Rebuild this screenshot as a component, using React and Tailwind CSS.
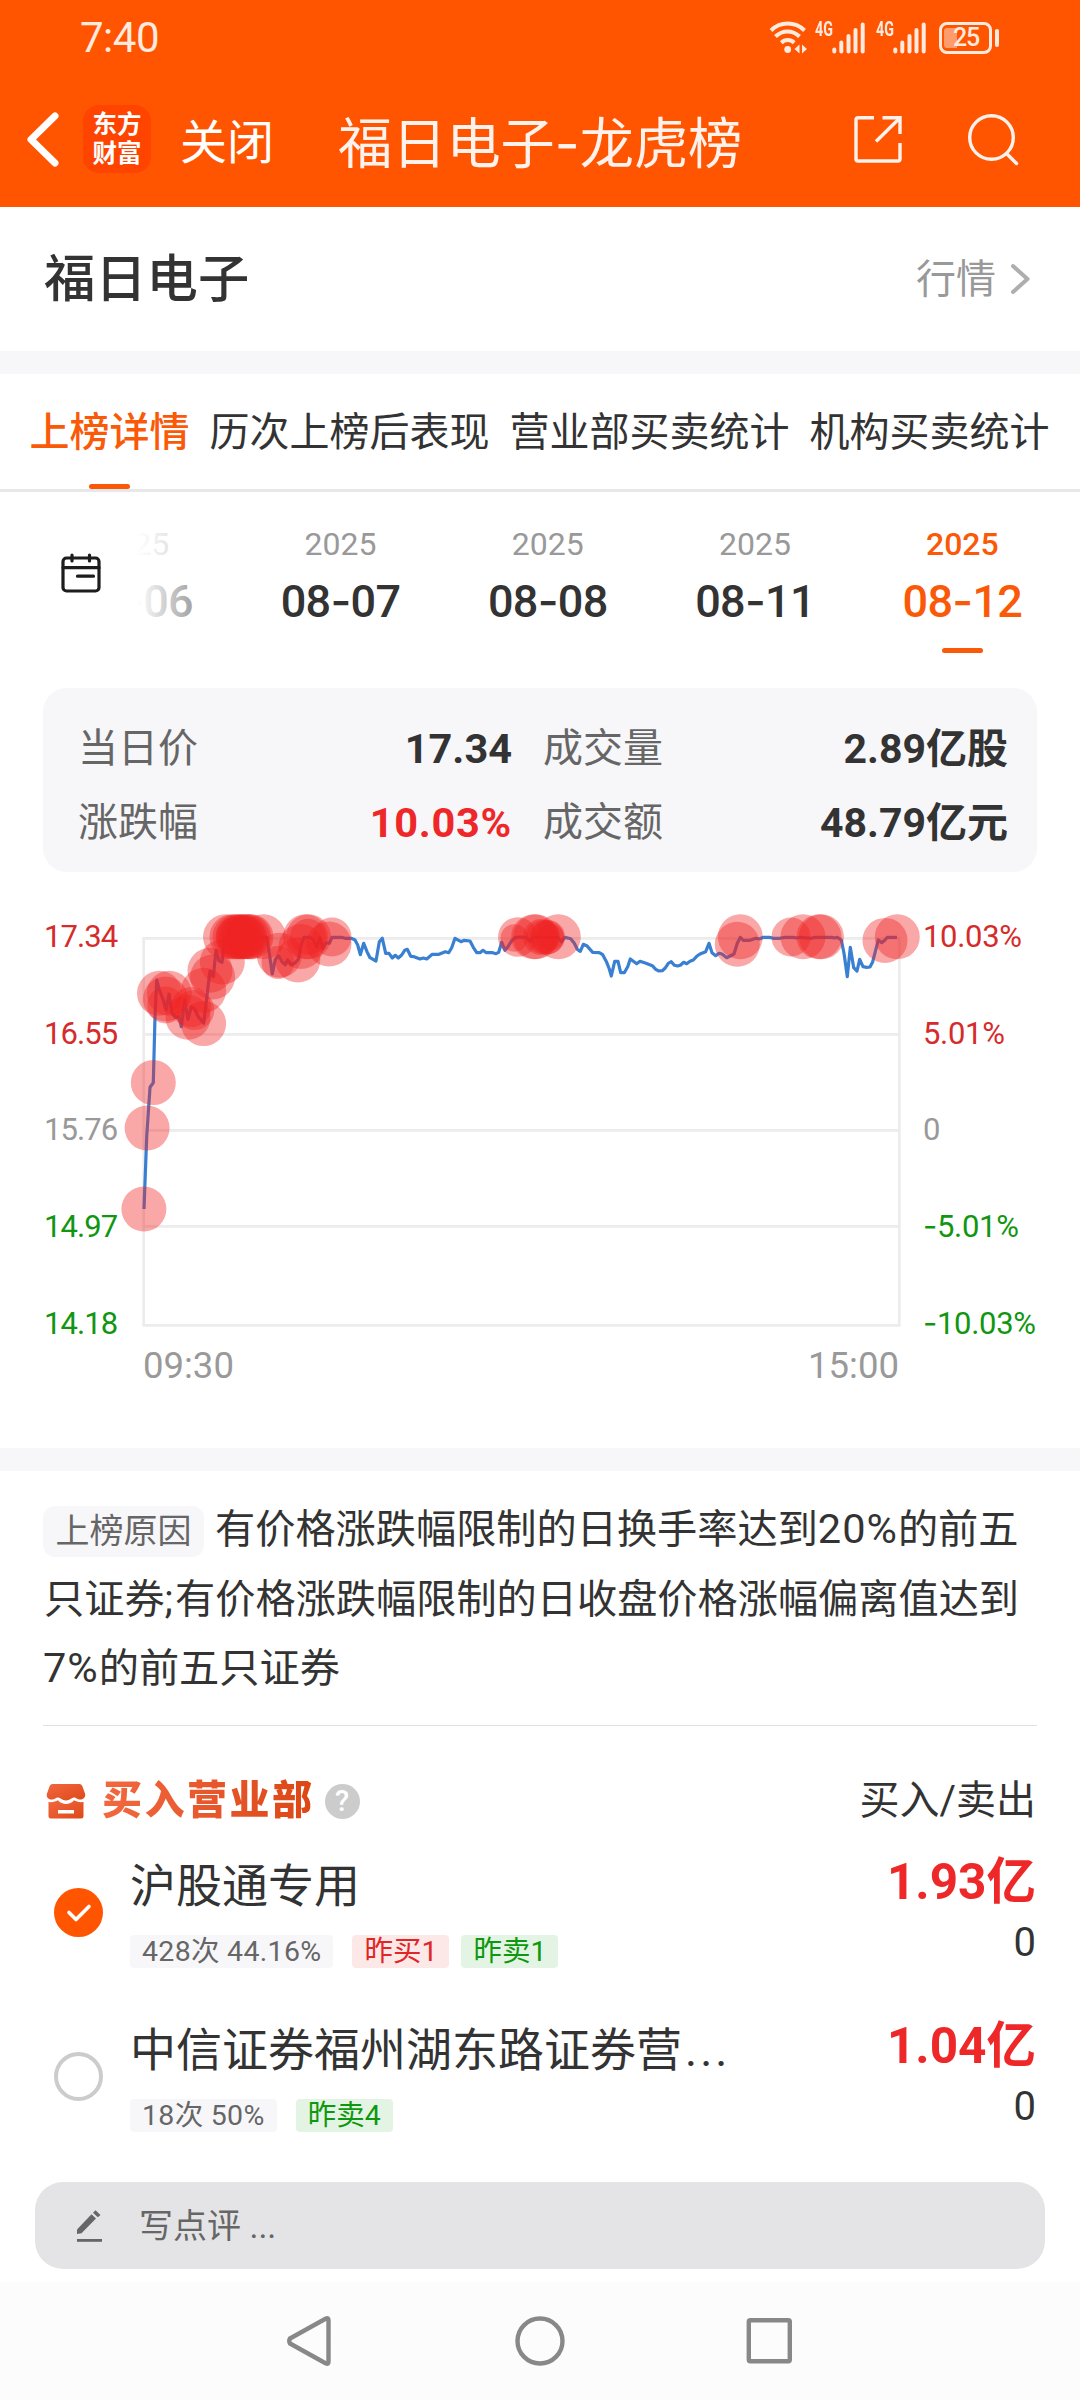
import React from "react";

/* Intraday price line, in page pixels relative to the chart's top-left corner (0, 900). */
const PRICE_LINE = [
  [144, 309], [146.7, 236.7], [150, 187.3], [153.3, 182.7], [155, 116.7], [156.7, 80], [159.3, 90], [162.7, 98.3], [166, 110],
  [169, 94], [172, 113.3], [175.3, 117.3], [179, 116.7], [181.3, 126.7], [184.7, 100], [188, 119.3], [191.3, 106.7], [194.7, 109.3],
  [198.3, 116.7], [203.7, 123.3], [207.3, 93.3], [210, 71], [213.3, 76.7], [216, 50.7], [219, 60.7], [222, 62.3], [224.7, 38.3],
  [228, 37.3], [266.7, 37.3], [269.3, 53.3], [272.3, 74], [275.3, 59.3], [278.7, 55.7], [282, 61.7], [285.3, 64.7], [287.7, 60],
  [291.3, 64.7], [295.3, 62.7], [298.3, 59.3], [301, 45], [304, 37.3], [310, 37.3], [313.3, 40], [316.7, 46.7], [320, 37.7],
  [322.7, 48.7], [326, 42.7], [329.3, 43.3], [332, 37.3], [341.7, 37.3], [345, 38.3], [351.7, 38.3], [355, 40], [357.7, 45],
  [360.3, 54.7], [363.7, 43.3], [367, 51.7], [370, 57.7], [376, 61], [379.3, 41.7], [382.3, 38.3], [385.7, 53.3], [389, 53.3],
  [392.3, 58], [395.3, 55.3], [398.3, 58], [401.7, 55], [404.7, 50.3], [407.3, 49.3], [410.7, 56.3], [414, 56.7], [420, 59],
  [423.3, 58], [426.7, 59], [432.3, 54.3], [439, 54.3], [445.3, 51.7], [448.7, 52.7], [451.7, 47.7], [455, 38.3], [461, 41.7],
  [464.3, 40.3], [470, 41], [473.3, 47.3], [476.7, 52.7], [480, 52.7], [483, 50.3], [486.3, 52.7], [492.7, 52.7], [496, 53.7],
  [498.7, 52.3], [501.7, 42.3], [505, 50.3], [508, 46.7], [511.7, 40.7], [515, 37.7], [520, 37], [526.7, 37.7], [530, 41],
  [533.3, 37.7], [558.3, 37.7], [561.7, 41.7], [564.7, 37.3], [570.7, 38.7], [574.3, 43.3], [577.3, 49.3], [580.3, 51.3],
  [583.3, 44.3], [586.7, 45.7], [592.7, 52.3], [599.3, 52.7], [602.7, 54.7], [606.7, 62.3], [609.3, 69], [611.3, 76], [614.7, 61.3],
  [618, 61.3], [620.7, 72.7], [624.3, 72.7], [627.7, 66.7], [630.3, 59], [636.7, 63.7], [640, 61.3], [646, 63.3], [652.3, 65.7],
  [655.7, 69.3], [659, 71], [662.3, 70.7], [665, 68.3], [668.3, 63.3], [671.3, 61.7], [674.3, 65.3], [677.7, 66], [680.7, 65],
  [683.7, 62.3], [686.7, 63.7], [690, 61.3], [693.3, 60], [696.7, 56.3], [700, 54], [705.7, 51.7], [709, 43.3], [712, 52.7],
  [715.7, 55.7], [719, 53.3], [722, 54], [726.7, 57.7], [734, 54], [737.3, 43.3], [740.3, 37.3], [743.3, 40.3], [750, 40.3],
  [756, 38.3], [759.3, 39], [763.3, 37.3], [769.3, 37.3], [773.3, 38.3], [780, 38.3], [785, 37.3], [793.3, 37.3], [796.7, 38],
  [800, 37.3], [808.3, 38], [811.7, 38.3], [815, 37.3], [831.7, 37.3], [834.3, 38], [837.3, 37.3], [841.3, 40], [844, 53.3],
  [847.3, 76.7], [850.3, 47.3], [853.7, 67.7], [857, 71], [859.7, 59.3], [863, 66.7], [866.7, 67.3], [870, 67], [872.7, 61.7],
  [875.3, 51.7], [878.3, 40], [881.7, 42.7], [884.7, 40.3], [887.3, 37.3], [897, 37.3],
];

/* Large-order markers: [cx, cy, r] */
const MARKERS = [
  [143.9, 309, 22.5], [147.1, 228, 22.5], [153.3, 182.6, 22.5], [159.5, 93.3, 22.5], [165.5, 99, 22.5], [169.3, 93.3, 22.5],
  [165.7, 105, 18.5], [188, 117.3, 22.5], [191.3, 107, 20], [194.3, 110, 20], [203.6, 123.6, 22.5], [203.6, 90.3, 22.5],
  [210, 70.3, 22.5], [212.6, 77, 22.5], [222.3, 62, 22.5], [225.5, 36.8, 22.5],
  [232, 36.8, 22.5], [235, 36.8, 22.5], [238, 36.8, 22.5], [240, 36.8, 22.5], [242, 36.8, 22.5], [244.5, 36.8, 22.5],
  [247, 36.8, 22.5], [249, 36.8, 22.5], [251, 36.8, 22.5], [236, 36.8, 20], [246, 36.8, 20], [263.5, 36.8, 22.5],
  [279.3, 55.3, 22.5], [278, 62.5, 16.5], [297.8, 60, 22.5], [301, 46.5, 22.5], [305.5, 36.8, 22.5], [308.5, 36.8, 22.5],
  [308, 36.8, 18], [329, 44, 22.5], [332, 37, 19.5],
  [517.7, 37, 19.7], [514.3, 38, 13.7], [533.7, 36.8, 22.5], [536, 36.8, 22.5], [541, 37, 18], [547, 37.5, 17], [548, 37, 17],
  [543, 37, 17], [551, 37, 13], [558.3, 36.8, 22.5],
  [737.3, 44.3, 22.5], [740.3, 36.8, 22.5], [791, 37, 19.5], [803, 36.8, 22.5], [819, 36.8, 22.5], [821.4, 36.8, 22.5],
  [885, 40.4, 22.5], [897.3, 36.8, 22.5],
];

const LEVELS = [
  { price: "17.34", pct: "10.03%", color: "text-[#d62b2b]", cell: "h-[97px]" },
  { price: "16.55", pct: "5.01%", color: "text-[#d62b2b]", cell: "h-[96px]" },
  { price: "15.76", pct: "0", color: "text-[#999999]", cell: "h-[97px]" },
  { price: "14.97", pct: "-5.01%", color: "text-[#119611]", cell: "h-[97px]" },
  { price: "14.18", pct: "-10.03%", color: "text-[#119611]", cell: "h-[97px]" },
];

const DATES = [
  { year: "2025", day: "08-06" },
  { year: "2025", day: "08-07" },
  { year: "2025", day: "08-08" },
  { year: "2025", day: "08-11" },
  { year: "2025", day: "08-12", active: true },
];

const TABS = ["上榜详情", "历次上榜后表现", "营业部买卖统计", "机构买卖统计"];

const BRANCHES = [
  {
    name: "沪股通专用",
    checked: true,
    stat: "428次 44.16%",
    tags: [{ label: "昨买1", tone: "red" }, { label: "昨卖1", tone: "green" }],
    buy: "1.93亿",
    sell: "0",
  },
  {
    name: "中信证券福州湖东路证券营",
    more: true,
    stat: "18次 50%",
    tags: [{ label: "昨卖4", tone: "green" }],
    buy: "1.04亿",
    sell: "0",
  },
];

/* Roboto's hyphen is short; Inter's longer one keeps the numerals evenly spaced. */
function Dashed({ text }) {
  const [a, b] = text.split("-");
  return (
    <>
      {a}
      <span className="font-['Inter'] leading-none">-</span>
      {b}
    </>
  );
}

function WifiIcon() {
  return (
    <svg width="40" height="34" viewBox="0 0 40 34" fill="none" stroke="#ffeadf" strokeWidth="4">
      <path d="M2 9.5C11.5 0.3 26 0.3 35.5 9.5" />
      <path d="M6.5 15.5C13.5 8.8 23.5 8.8 30.5 15.5" />
      <path d="M12.3 21.8C16 18.2 21.5 18.2 25.2 21.8" />
      <circle cx="18.7" cy="28.5" r="3.4" fill="#ffeadf" stroke="none" />
      <path d="M25.5 28l5-4.5v9zM33 23.5l5 4.5-5 4.5z" fill="#ffeadf" stroke="none" />
    </svg>
  );
}

function Signal() {
  return (
    <div className="flex w-[51px]">
      <span className="w-[17px] origin-left scale-x-[0.68] text-[21px] leading-[15px] font-bold">4G</span>
      <svg width="34" height="32" viewBox="0 0 34 32" stroke="#ffeadf" strokeWidth="4" strokeLinecap="round">
        <path d="M2.3 27.5V29.5M9.3 20.5V29.5M16.5 14V29.5M23.5 8V29.5M30.7 2.5V29.5" />
      </svg>
    </div>
  );
}

function StatusBar() {
  return (
    <div className="flex h-[76px] items-center pl-[80px] pr-[81px] text-[#ffeadf]">
      <span className="flex-1 text-[42px] leading-[44px] tracking-[-0.5px]">7:40</span>
      <WifiIcon />
      <div className="ml-[6px]">
        <Signal />
      </div>
      <div className="ml-[10px]">
        <Signal />
      </div>
      <div className="ml-[12px] flex items-center">
        <div className="flex h-[32px] w-[53px] items-center rounded-[8px] border-[3px] border-[#ffeadf] pl-[2px]">
          <div className="h-[20px] w-[13px] rounded-l-[3px] bg-[#ff9c6c]" />
          <span className="-ml-[4px] text-[25px] leading-[26px] font-medium tracking-[-1.2px]">25</span>
        </div>
        <div className="ml-[3px] h-[18px] w-[4px] rounded-[2px] bg-[#ffeadf]" />
      </div>
    </div>
  );
}

function TitleBar() {
  return (
    <div className="flex h-[131px] items-start pt-[29px] text-white">
      <svg className="mt-[6px] ml-[24px]" width="38" height="58" viewBox="0 0 38 58" fill="none" stroke="#fff" strokeWidth="7" strokeLinecap="round" strokeLinejoin="round">
        <path d="M31 5L7 28.5L31 52" />
      </svg>
      <div className="ml-[21px] flex h-[68px] w-[68px] flex-col items-center justify-center rounded-[16px] bg-[#ff4400] pb-[1px] text-[24.5px] leading-[29px] font-bold">
        <span>东方</span>
        <span>财富</span>
      </div>
      <span className="mt-[6px] ml-[29px] text-[47px] leading-[64px]">关闭</span>
      <span className="mt-[8px] ml-[64px] w-[515px] text-[54.2px] leading-[64px] text-[#fff2ec]">
        <Dashed text="福日电子-龙虎榜" />
      </span>
      <svg className="mt-[9px] shrink-0" width="50" height="52" viewBox="0 0 50 52" fill="none" stroke="#fff2ec" strokeWidth="3.4" strokeLinejoin="round">
        <path d="M21 3.7H5a2 2 0 0 0-2 2V45a2 2 0 0 0 2 2H45a2 2 0 0 0 2-2V29" />
        <path d="M29.5 3.7H47V20" strokeLinejoin="miter" />
        <path d="M46.5 4.2L23 27.5" />
      </svg>
      <svg className="mt-[8px] ml-[64px] shrink-0" width="54" height="54" viewBox="0 0 54 54" fill="none" stroke="#fff2ec" strokeWidth="3.4" strokeLinecap="round">
        <circle cx="24.5" cy="24.5" r="21.8" />
        <path d="M39.5 40.5L49.5 50.5" />
      </svg>
    </div>
  );
}

function StockHeader() {
  return (
    <div className="flex h-[144px] items-center pt-[2px] pl-[44px] pr-[49px]">
      <h1 className="flex-1 text-[51.3px] leading-[60px] font-medium text-[#333333]">福日电子</h1>
      <span className="text-[40px] leading-[48px] text-[#999999]">行情</span>
      <svg className="ml-[13px]" width="22" height="34" viewBox="0 0 22 34" fill="none" stroke="#aeaeae" strokeWidth="4" strokeLinecap="round" strokeLinejoin="round">
        <path d="M4 3L18.5 16L4 29" />
      </svg>
    </div>
  );
}

function Tabs() {
  return (
    <div className="flex h-[118px] justify-center gap-[20px] border-b-[3px] border-[#e8e8e8] pr-[1px]">
      {TABS.map((tab, i) => (
        <div key={tab} className="flex flex-col items-center justify-between pt-[35px]">
          <span className={i === 0 ? "text-[40px] leading-[48px] font-medium text-[#fa5a08]" : "text-[40px] leading-[48px] text-[#333333]"}>
            {tab}
          </span>
          {i === 0 && <span className="h-[5px] w-[41px] rounded-full bg-[#fa5a08]" />}
        </div>
      ))}
    </div>
  );
}

function CalendarIcon() {
  return (
    <svg width="40" height="40" viewBox="0 0 40 40" fill="none" stroke="#1d1d1d" strokeWidth="3.2" strokeLinecap="round">
      <rect x="2" y="5" width="36" height="33" rx="3.5" />
      <path d="M2 14.7H38M11 2V8M28.5 2V8M16.5 23.2H32.5" />
    </svg>
  );
}

function DateStrip() {
  return (
    <div className="flex h-[196px]">
      <div className="relative z-10 w-[137px] bg-white pt-[61px] pl-[61px]">
        <CalendarIcon />
      </div>
      <div className="relative flex w-[943px] justify-end pr-[14px]">
        {DATES.map((d) => (
          <div
            key={d.day}
            className={
              d.active
                ? "flex w-[207.3px] shrink-0 flex-col items-center pt-[34px] text-[#fa5a08]"
                : "flex w-[207.3px] shrink-0 flex-col items-center pt-[34px] text-[#333333]"
            }
          >
            <span className={d.active ? "text-[32px] leading-[36px] font-medium" : "text-[32px] leading-[36px] text-[#999999]"}>{d.year}</span>
            <span className="mt-[16px] text-[45px] leading-[46px] font-medium tracking-[-0.7px]">
              <Dashed text={d.day} />
            </span>
            {d.active && <span className="mt-[23px] h-[5px] w-[41px] rounded-full bg-[#fa5a08]" />}
          </div>
        ))}
        <div className="absolute inset-y-0 left-0 w-[124px] bg-linear-to-r from-white to-white/0" />
      </div>
    </div>
  );
}

function Stat({ label, value, valueClass }) {
  return (
    <div className="flex items-center justify-between">
      <span className="text-[40px] leading-[50px] text-[#666666]">{label}</span>
      <span className={valueClass}>{value}</span>
    </div>
  );
}

function SummaryCard() {
  return (
    <div className="mx-[43px] grid h-[184px] grid-cols-[434px_465px] content-start gap-x-[31px] gap-y-[24px] rounded-[24px] bg-[#f7f7fa] px-[35px] pt-[36px]">
      <Stat label="当日价" value="17.34" valueClass="text-[41.5px] leading-[50px] font-bold text-[#333333]" />
      <Stat label="成交量" value="2.89亿股" valueClass="text-[41px] leading-[50px] font-bold text-[#333333]" />
      <Stat label="涨跌幅" value="10.03%" valueClass="text-[41.5px] leading-[50px] font-bold tracking-[0.7px] text-[#ee2828]" />
      <Stat label="成交额" value="48.79亿元" valueClass="text-[41px] leading-[50px] font-bold text-[#333333]" />
    </div>
  );
}

function Chart() {
  return (
    <div className="relative h-[576px]">
      <svg className="absolute top-[28px] left-0" width="1080" height="440" viewBox="0 0 1080 440" fill="none">
        <g stroke="#ececec" strokeWidth="2.7">
          <path d="M143.7 37V425.3M899.3 37V425.3" />
          <path d="M142.5 38.3H899.3M142.5 134.3H899.3M142.5 230.3H899.3M142.5 326.3H899.3M142.5 425.3H900.5" />
        </g>
        <polyline points={PRICE_LINE.map((p) => p.join(",")).join(" ")} stroke="#3a80d2" strokeWidth="3.2" strokeLinejoin="round" />
        <g fill="#f02222" fillOpacity="0.4">
          {MARKERS.map(([cx, cy, r], i) => (
            <circle key={i} cx={cx} cy={cy} r={r} />
          ))}
        </g>
      </svg>
      <div className="relative flex justify-between pt-[16px] text-[31px] leading-[97px]">
        <div className="flex w-[144px] flex-col pl-[44px] tracking-[-0.9px]">
          {LEVELS.map((l) => (
            <span key={l.price} className={`${l.cell} ${l.color}`}>{l.price}</span>
          ))}
        </div>
        <div className="flex w-[157px] flex-col tracking-[-0.3px]">
          {LEVELS.map((l) => (
            <span key={l.pct} className={`${l.cell} ${l.color}`}>
              {l.pct.startsWith("-") ? <Dashed text={l.pct} /> : l.pct}
            </span>
          ))}
        </div>
      </div>
      <div className="-mt-[28px] flex justify-between pr-[181px] pl-[143px] text-[36.5px] leading-[44px] text-[#999999]">
        <span>09:30</span>
        <span>15:00</span>
      </div>
    </div>
  );
}

function Reason() {
  return (
    <div className="mx-[43px] h-[255px] border-b border-[#e2e2e2] pt-[24px] text-[40.2px] leading-[69.5px] whitespace-nowrap text-[#333333]">
      <div className="flex items-center">
        <span className="mt-[4px] mr-[11px] flex h-[51px] w-[161px] items-center justify-center rounded-[12px] bg-[#f7f7fa] text-[34px] leading-[51px] text-[#666666]">
          上榜原因
        </span>
        <span>
          有价格涨跌幅限制的日换手率达到<span className="text-[41.5px] leading-none tracking-[1px]">20%</span>的前五
        </span>
      </div>
      <div className="pl-[1px]">
        只证券<span className="tracking-[2px]">;</span>有价格涨跌幅限制的日收盘价格涨幅偏离值达到
      </div>
      <div>
        <span className="text-[41.5px] leading-none tracking-[1px]">7%</span>的前五只证券
      </div>
    </div>
  );
}

function StoreIcon() {
  return (
    <svg width="40" height="36" viewBox="0 0 40 36">
      <defs>
        <linearGradient id="store" x1="0" y1="0" x2="1" y2="1">
          <stop offset="0" stopColor="#f2663f" />
          <stop offset="1" stopColor="#dd4a1a" />
        </linearGradient>
      </defs>
      <path
        fill="url(#store)"
        d="M6.5 1H33.5Q35.5 1 36.3 3L39 10.5C40 14 37.5 16.5 34.5 16.5C31 16.5 30 14.5 28 14.5C25.5 14.5 24 17.5 20 17.5C16 17.5 14.5 14.5 12 14.5C10 14.5 9 16.5 5.5 16.5C2 16.5 0 14 1 10.5L3.7 3Q4.5 1 6.5 1Z"
      />
      <path
        fill="url(#store)"
        fillRule="evenodd"
        d="M2.5 19C7 19.5 9.5 18.5 12 17.3C14 20 17 21 20 21C23 21 26 20 28 17.3C30.5 18.5 33 19.5 37.5 19V33Q37.5 35.5 35 35.5H5Q2.5 35.5 2.5 33ZM12 27V30.5H28V27Z"
      />
    </svg>
  );
}

function BuyHeader() {
  return (
    <div className="flex h-[62px] items-center pr-[44px] pl-[46px]">
      <StoreIcon />
      <span className="ml-[16px] bg-linear-to-r from-[#f2683f] to-[#dc4612] bg-clip-text text-[40px] leading-[50px] font-black tracking-[2.5px] text-transparent">
        买入营业部
      </span>
      <span className="ml-[10px] flex h-[35px] w-[35px] items-center justify-center rounded-full bg-[#cccccc] text-[29px] leading-[35px] font-medium text-white">?</span>
      <span className="ml-auto text-[40px] leading-[50px] text-[#333333]">买入/卖出</span>
    </div>
  );
}

function Radio({ checked }) {
  if (checked) {
    return (
      <span className="flex h-[49px] w-[49px] items-center justify-center rounded-full bg-[#ff5500]">
        <svg width="26" height="20" viewBox="0 0 26 20" fill="none" stroke="#fff" strokeWidth="3.6" strokeLinecap="round" strokeLinejoin="round">
          <path d="M3 9.5L10 16.5L23 3.5" />
        </svg>
      </span>
    );
  }
  return <span className="h-[49px] w-[49px] rounded-full border-[4px] border-[#cccccc]" />;
}

function BranchRow({ row }) {
  return (
    <div className="flex h-[164.3px] items-start pr-[44px] pl-[54px] text-[#333333]">
      <div className="mt-[58px] flex">
        <Radio checked={row.checked} />
      </div>
      <div className="ml-[27px] flex-1">
        <div className="mt-[26px] text-[46px] leading-[60px] whitespace-nowrap">
          {row.name}
          {row.more && <span className="ml-[3px] tracking-[3px]">...</span>}
        </div>
        <div className="mt-[19px] flex h-[33px] text-[28.5px] leading-[33px]">
          <span className="mr-[19px] rounded-[4px] bg-[#f7f7fa] px-[12px] tracking-[0.3px] text-[#666666]">{row.stat}</span>
          {row.tags.map((t) => (
            <span
              key={t.label}
              className={
                t.tone === "red"
                  ? "mr-[12px] rounded-[4px] bg-[#fde8e8] px-[12px] text-[#e02626]"
                  : "mr-[12px] rounded-[4px] bg-[#e4f4e4] px-[12px] text-[#0f980f]"
              }
            >
              {t.label}
            </span>
          ))}
        </div>
      </div>
      <div className="flex flex-col items-end">
        <span className="mt-[20px] text-[49.5px] leading-[64px] font-bold text-[#ee2828]">{row.buy}</span>
        <span className="mt-[4px] text-[40px] leading-[50px]">{row.sell}</span>
      </div>
    </div>
  );
}

function CommentBar() {
  return (
    <div className="mx-[35px] flex h-[87px] items-center rounded-[28px] bg-[#e4e4e6] pl-[41px] text-[#666666]">
      <svg width="28" height="34" viewBox="0 0 28 34" fill="#666">
        <path d="M1 25V20.5L15.5 5.3L20 9.5L5.5 24.3Z" />
        <path d="M17 3.8L19.5 1.3L24.5 6L21.8 8.3Z" />
        <path d="M1 30H26V32.8H1Z" />
      </svg>
      <span className="ml-[35px] text-[34px] leading-[44px]">写点评 ...</span>
    </div>
  );
}

function NavBar() {
  return (
    <div className="flex h-[118px] items-center bg-[#fcfcfc]">
      <svg width="1080" height="118" viewBox="0 0 1080 118" fill="none" stroke="#888" strokeWidth="4.4" strokeLinejoin="round">
        <path d="M290 56.5Q288.5 59 290 61.5L326 81.5Q328.5 82.5 328.5 80V38Q328.5 35.5 326 36.5Z" />
        <circle cx="540" cy="59" r="22.5" />
        <rect x="748.8" y="38.2" width="41" height="41" rx="1.5" />
      </svg>
    </div>
  );
}

export default function App() {
  return (
    <div className="flex h-[2400px] w-[1080px] flex-col overflow-hidden bg-white font-['Roboto','Noto_Sans_CJK_SC',sans-serif]">
      <header className="h-[207px] bg-[#ff5500]">
        <StatusBar />
        <TitleBar />
      </header>
      <StockHeader />
      <div className="h-[23px] bg-[#f7f7fa]" />
      <Tabs />
      <DateStrip />
      <SummaryCard />
      <Chart />
      <div className="h-[23px] bg-[#f7f7fa]" />
      <Reason />
      <div className="h-[456px] pt-[44px]">
        <BuyHeader />
        <div className="-mt-[2px]">
          {BRANCHES.map((row) => (
            <BranchRow key={row.name} row={row} />
          ))}
        </div>
      </div>
      <CommentBar />
      <div className="h-[13px]" />
      <NavBar />
    </div>
  );
}
